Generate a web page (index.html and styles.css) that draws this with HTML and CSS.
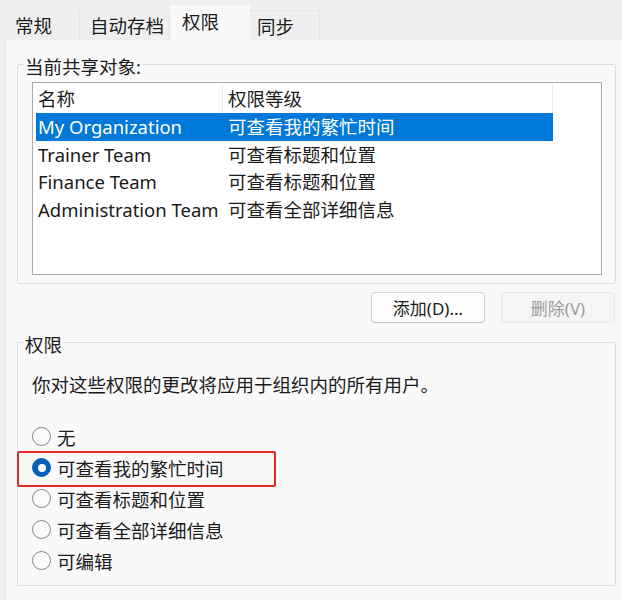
FILE: index.html
```html
<!DOCTYPE html>
<html lang="zh-CN">
<head>
    <meta charset="UTF-8">
    <meta name="viewport" content="width=device-width, initial-scale=1.0">
    <title>权限</title>
    <link rel="stylesheet" href="styles.css">
</head>
<body>
    <div class="tabs">
        <div class="tab tab-general">常规</div>
        <div class="tab tab-archive">自动存档</div>
        <div class="tab tab-perm active">权限</div>
        <div class="tab tab-sync">同步</div>
    </div>

    <div class="panel">
        <fieldset class="group shared">
            <legend>当前共享对象:</legend>
            <div class="list">
                <div class="row head">
                    <span class="col-name">名称</span>
                    <span class="col-level">权限等级</span>
                </div>
                <div class="row selected">
                    <span class="col-name">My Organization</span>
                    <span class="col-level">可查看我的繁忙时间</span>
                </div>
                <div class="row">
                    <span class="col-name">Trainer Team</span>
                    <span class="col-level">可查看标题和位置</span>
                </div>
                <div class="row">
                    <span class="col-name">Finance Team</span>
                    <span class="col-level">可查看标题和位置</span>
                </div>
                <div class="row">
                    <span class="col-name">Administration Team</span>
                    <span class="col-level">可查看全部详细信息</span>
                </div>
            </div>
        </fieldset>

        <div class="actions">
            <button class="btn">添加(D)...</button>
            <button class="btn" disabled>删除(V)</button>
        </div>

        <fieldset class="group perms">
            <legend>权限</legend>
            <p class="note">你对这些权限的更改将应用于组织内的所有用户。</p>
            <div class="radios">
                <label class="radio"><span class="dot"></span>无</label>
                <label class="radio checked"><span class="dot"></span>可查看我的繁忙时间<span class="mark"></span></label>
                <label class="radio"><span class="dot"></span>可查看标题和位置</label>
                <label class="radio"><span class="dot"></span>可查看全部详细信息</label>
                <label class="radio"><span class="dot"></span>可编辑</label>
            </div>
        </fieldset>
    </div>
</body>
</html>
```

FILE: styles.css
```css
body {
    margin: 0;
    background: #efefef;
    color: #1b1b1b;
    font-family: "Noto Sans", "Noto Sans CJK SC", sans-serif;
    font-size: 18.5px;
    height: 600px;
    overflow: hidden;
}

/* tab strip */
.tabs {
    display: flex;
    align-items: flex-end;
    height: 40px;
    padding-left: 5px;
}
.tab {
    height: 30px;
    line-height: 32px;
    padding-left: 10px;
    box-sizing: border-box;
    border-right: 1px solid #e6e6e6;
}
.tab-general { width: 75px; }
.tab-archive { width: 90px; }
.tab-perm { width: 80px; padding-left: 12px; }
.tab-sync { width: 70px; padding-left: 7px; border-top: 1px solid #e6e6e6; }
.tab.active {
    height: 35px;
    line-height: 33px;
    background: #f9f9f9;
    border-right: none;
}

.panel {
    margin-left: 5px;
    background: #f9f9f9;
    border-left: 1px solid #e8e8e8;
    padding: 10px 6px 30px 11px;
}

/* group boxes */
.group {
    margin: 0;
    border: 1px solid #dedede;
    border-radius: 2px;
    padding: 4px 13px 8px 14px;
}
.group legend {
    margin-left: -8px;
    padding: 6px 1px 0;
    line-height: 22px;
}

/* list view */
.list {
    height: 193px;
    box-sizing: border-box;
    background: #fff;
    border: 1px solid #acacac;
    padding-left: 3px;
}
.row {
    display: flex;
    width: 517px;
    height: 27.5px;
    line-height: 27.5px;
    white-space: nowrap;
}
.row.head {
    height: 30px;
    line-height: 32px;
}
.col-name {
    width: 187px;
    padding-left: 2px;
    box-sizing: border-box;
}
.col-level {
    flex: 1;
    padding-left: 5px;
}
.row.head .col-name,
.row.head .col-level {
    border-right: 1px solid #ececec;
}
.row.selected {
    background: #0078d7;
    color: #fff;
}

/* buttons */
.actions {
    display: flex;
    justify-content: flex-end;
    gap: 16px;
    margin: 8px 1px 5px 0;
}
.btn {
    width: 114px;
    height: 31px;
    font-family: inherit;
    font-size: 17px;
    color: #1b1b1b;
    background: #fdfdfd;
    border: 1px solid #d5d5d5;
    border-bottom-color: #c4c4c4;
    border-radius: 4px;
}
.btn:disabled {
    color: #9d9d9d;
    background: #f5f5f5;
    border-color: #e9e9e9;
}

/* permissions */
.perms {
    padding-bottom: 9px;
}
.note {
    margin: 14px 0 25px;
    line-height: 22px;
}
.radio {
    position: relative;
    display: flex;
    align-items: center;
    height: 31px;
}
.dot {
    width: 19px;
    height: 19px;
    box-sizing: border-box;
    border: 1px solid #858585;
    border-radius: 50%;
    background: #fbfbfb;
    margin-right: 6px;
    display: flex;
    align-items: center;
    justify-content: center;
}
.checked .dot {
    background: #005fb8;
    border-color: #005fb8;
}
.checked .dot::after {
    content: "";
    width: 8px;
    height: 8px;
    border-radius: 50%;
    background: #fff;
}
.mark {
    position: absolute;
    left: -15px;
    top: -1px;
    width: 259px;
    height: 36px;
    box-sizing: border-box;
    border: 2px solid #e42a27;
    border-radius: 2px;
}
```
